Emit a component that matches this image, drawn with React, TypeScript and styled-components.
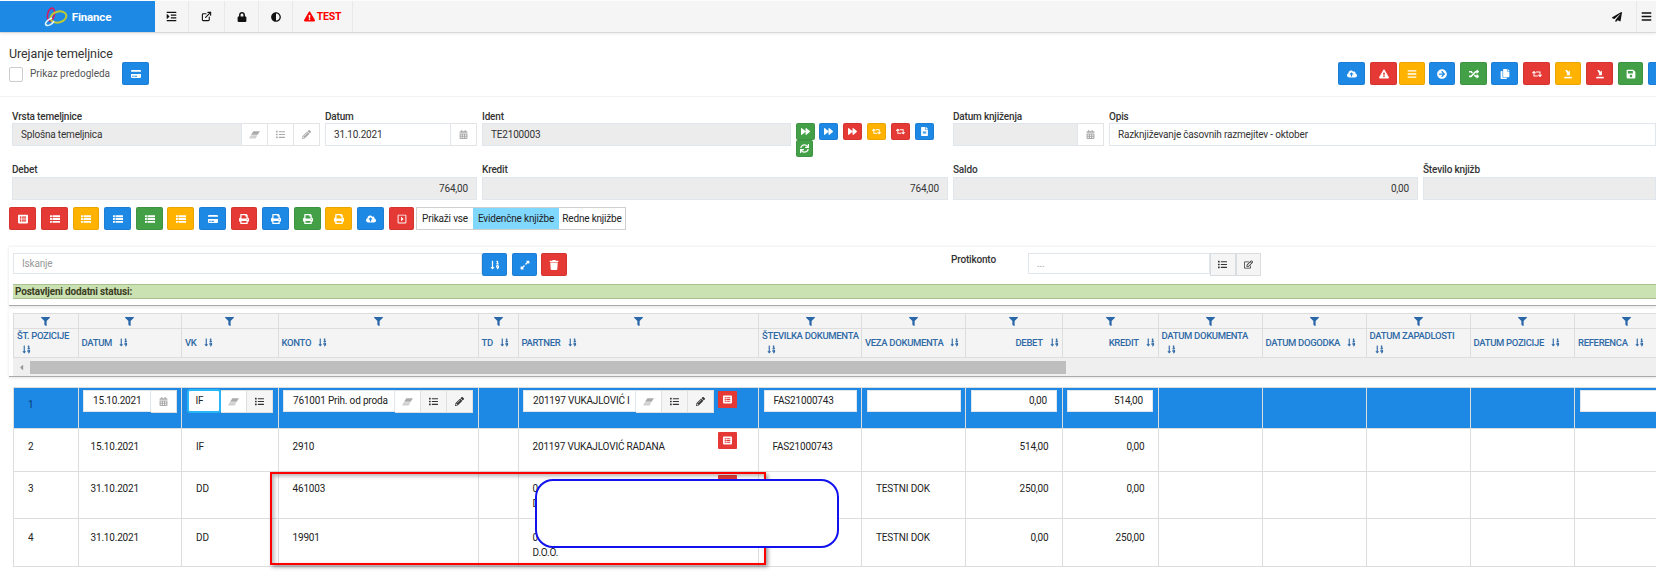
import React from "react";
import styled, {createGlobalStyle} from "styled-components";
import {IconType} from "react-icons";
import {FiExternalLink} from "react-icons/fi";
import {
    FaAdjust,
    FaArrowCircleRight,
    FaBars,
    FaCalendarAlt,
    FaCaretLeft,
    FaCloudUploadAlt,
    FaCopy,
    FaCreditCard,
    FaExclamationTriangle,
    FaExpandAlt,
    FaFileAlt,
    FaFilter,
    FaForward,
    FaIndent,
    FaList,
    FaListAlt,
    FaLock,
    FaPaperPlane,
    FaPencilAlt,
    FaPrint,
    FaRandom,
    FaRegCaretSquareRight,
    FaRegEdit,
    FaRetweet,
    FaSave,
    FaSortNumericDown,
    FaSync,
    FaTrash,
} from "react-icons/fa";

const RED = "#e53935";
const YELLOW = "#ffb300";
const BLUE = "#1e88e5";
const GREEN = "#43a047";

const COLUMNS = [64.5, 103.5, 96.5, 200, 40, 240.5, 103, 104, 96.5, 96, 104, 104, 104, 104.5, 104];

const GlobalStyle = createGlobalStyle`
  html, body {
    margin: 0;
    background: #fff;
  }

  body {
    font-family: Roboto, "Liberation Sans", sans-serif;
    font-size: 10px;
    letter-spacing: -0.18px;
    color: #222;
  }
`;

// tray with an arrow, used on the top toolbar
const TrayArrow: IconType = (props) => (
    <svg viewBox="0 0 16 16" width="1em" height="1em" fill="currentColor" {...props}>
        <path d="M2 12.5h12V15H2z"/>
        <path d="M3.5 1.5h3l2 3 2.5-2v7.5H5l2-2.2z"/>
    </svg>
);

// the old flat eraser, no package has this one
const Eraser: IconType = (props) => (
    <svg viewBox="0 0 16 16" width="1.3em" height="1.3em" fill="currentColor" {...props}>
        <path d="M6 3h9l-3.2 5H2.8z"/>
        <path d="M2.5 8.5h9L9 13H0z" opacity="0.55"/>
    </svg>
);

const ThRows: IconType = (props) => (
    <svg viewBox="0 0 16 14" width="1em" height="1em" fill="currentColor" {...props}>
        <path d="M0 1h3v3H0zM4 1h12v3H4zM0 5.5h3v3H0zM4 5.5h12v3H4zM0 10h3v3H0zM4 10h12v3H4z"/>
    </svg>
);

const Logo = () => (
    <svg width="24" height="20" viewBox="0 0 24 20" fill="none">
        <ellipse cx="7" cy="7.5" rx="3.4" ry="6.5" stroke="#d81b60" strokeWidth="1.6"
                 transform="rotate(12 7 7.5)"/>
        <ellipse cx="14.5" cy="10" rx="8" ry="5.5" stroke="#c0ca33" strokeWidth="2"
                 transform="rotate(-14 14.5 10)"/>
        <path d="M8 11 C3 13 0.5 16 2 18 C4 19.5 8 17.5 10 14" stroke="#e3f2fd" strokeWidth="1.6"/>
    </svg>
);

const ActionButton = ({icon: Icon, color, w = 27, h = 23, size = 10, gap = 0}: {
    icon: IconType;
    color: string;
    w?: number;
    h?: number;
    size?: number;
    gap?: number;
}) => (
    <Btn $color={color} $w={w} $h={h} $gap={gap}>
        <Icon size={size}/>
    </Btn>
);

const TOP_ACTIONS: [IconType, string, number, number][] = [
    [FaCloudUploadAlt, BLUE, 27, 0],
    [FaExclamationTriangle, RED, 27, 5],
    [FaBars, YELLOW, 26, 2],
    [FaArrowCircleRight, BLUE, 26, 4],
    [FaRandom, GREEN, 27, 5],
    [FaCopy, BLUE, 27, 4],
    [FaRetweet, RED, 27, 5],
    [TrayArrow, YELLOW, 26, 5],
    [TrayArrow, RED, 27, 5],
    [FaSave, GREEN, 25, 5],
    [FaSave, BLUE, 27, 5],
];

const TOOL_ACTIONS: [IconType, string, number, number][] = [
    [FaListAlt, RED, 27, 0],
    [ThRows, RED, 27, 5],
    [ThRows, YELLOW, 26, 5],
    [ThRows, BLUE, 27, 5],
    [ThRows, GREEN, 27, 5],
    [ThRows, YELLOW, 27, 4],
    [FaCreditCard, BLUE, 27, 5],
    [FaPrint, RED, 26, 5],
    [FaPrint, BLUE, 27, 5],
    [FaPrint, GREEN, 27, 5],
    [FaPrint, YELLOW, 27, 4],
    [FaCloudUploadAlt, BLUE, 27, 5],
    [FaRegCaretSquareRight, RED, 25, 5],
];

const IDENT_ACTIONS: [IconType, string][] = [
    [FaForward, GREEN],
    [FaForward, BLUE],
    [FaForward, RED],
    [FaRetweet, YELLOW],
    [FaRetweet, RED],
    [FaFileAlt, BLUE],
];

const HEADERS: [string, boolean?][] = [
    ["Št. pozicije"],
    ["Datum"],
    ["VK"],
    ["Konto"],
    ["TD"],
    ["Partner"],
    ["Številka dokumenta"],
    ["Veza dokumenta"],
    ["Debet", true],
    ["Kredit", true],
    ["Datum dokumenta"],
    ["Datum dogodka"],
    ["Datum zapadlosti"],
    ["Datum pozicije"],
    ["Referenca"],
];

const Columns = () => (
    <colgroup>
        {COLUMNS.map((w, i) => <col key={i} style={{width: w}}/>)}
    </colgroup>
);

const RowButton = () => (
    <RowAction>
        <FaListAlt size={9}/>
    </RowAction>
);

export default function App() {
    return (
        <Page>
            <GlobalStyle/>
            <NavBar>
                <Brand>
                    <Logo/>
                    Finance
                </Brand>
                <NavItem $w={34}><FaIndent size={11}/></NavItem>
                <NavItem $w={36}><FiExternalLink size={11} strokeWidth={2.4}/></NavItem>
                <NavItem $w={34}><FaLock size={10}/></NavItem>
                <NavItem $w={34}><FaAdjust size={10}/></NavItem>
                <NavItem $w={60} $red><FaExclamationTriangle size={11}/>TEST</NavItem>
                <NavRight>
                    <NavItem $w={39}><FaPaperPlane size={10}/></NavItem>
                    <NavItem $w={19} $first><FaBars size={11}/></NavItem>
                </NavRight>
            </NavBar>

            <TitleBar>
                <div>
                    <Title>Urejanje temeljnice</Title>
                    <Preview>
                        <CheckBox/>
                        <PreviewLabel>Prikaz predogleda</PreviewLabel>
                        <ActionButton icon={FaCreditCard} color={BLUE}/>
                    </Preview>
                </div>
                <TopActions>
                    {TOP_ACTIONS.map(([icon, color, w, gap], i) => (
                        <ActionButton key={i} icon={icon} color={color} w={w} gap={gap}/>
                    ))}
                </TopActions>
            </TitleBar>

            <FirstFormRow>
                <div>
                    <FieldLabel>Vrsta temeljnice</FieldLabel>
                    <InputGroup>
                        <TextBox $disabled>Splošna temeljnica</TextBox>
                        <Addon $dim><Eraser/></Addon>
                        <Addon $dim><FaList/></Addon>
                        <Addon $dim><FaPencilAlt/></Addon>
                    </InputGroup>
                </div>
                <div>
                    <FieldLabel>Datum</FieldLabel>
                    <InputGroup>
                        <TextBox>31.10.2021</TextBox>
                        <Addon $dim><FaCalendarAlt/></Addon>
                    </InputGroup>
                </div>
                <div>
                    <FieldLabel>Ident</FieldLabel>
                    <InputGroup>
                        <TextBox $disabled>TE2100003</TextBox>
                    </InputGroup>
                </div>
                <IdentActions>
                    {IDENT_ACTIONS.map(([icon, color], i) => (
                        <ActionButton key={i} icon={icon} color={color} w={19} h={17} size={9}/>
                    ))}
                    <ActionButton icon={FaSync} color={GREEN} w={17} h={17} size={9}/>
                </IdentActions>
                <div>
                    <FieldLabel>Datum knjiženja</FieldLabel>
                    <InputGroup>
                        <TextBox $disabled/>
                        <Addon $dim><FaCalendarAlt/></Addon>
                    </InputGroup>
                </div>
                <div>
                    <FieldLabel>Opis</FieldLabel>
                    <InputGroup>
                        <TextBox>Razknjiževanje časovnih razmejitev - oktober</TextBox>
                    </InputGroup>
                </div>
            </FirstFormRow>

            <SecondFormRow>
                <div>
                    <FieldLabel $tall>Debet</FieldLabel>
                    <TextBox $disabled $right>764,00</TextBox>
                </div>
                <div>
                    <FieldLabel $tall>Kredit</FieldLabel>
                    <TextBox $disabled $right>764,00</TextBox>
                </div>
                <div>
                    <FieldLabel $tall>Saldo</FieldLabel>
                    <TextBox $disabled $right>0,00</TextBox>
                </div>
                <div>
                    <FieldLabel $tall>Število knjižb</FieldLabel>
                    <TextBox $disabled $right/>
                </div>
            </SecondFormRow>

            <ToolRow>
                {TOOL_ACTIONS.map(([icon, color, w, gap], i) => (
                    <ActionButton key={i} icon={icon} color={color} w={w} gap={gap}/>
                ))}
                <Toggle>
                    <ToggleItem $w={56}>Prikaži vse</ToggleItem>
                    <ToggleItem $w={86} $active>Evidenčne knjižbe</ToggleItem>
                    <ToggleItem $w={66}>Redne knjižbe</ToggleItem>
                </Toggle>
            </ToolRow>

            <SearchPanel>
                <SearchRow>
                    <SearchBox>Iskanje</SearchBox>
                    <ActionButton icon={FaSortNumericDown} color={BLUE} w={25}/>
                    <ActionButton icon={FaExpandAlt} color={BLUE} w={25} gap={5}/>
                    <ActionButton icon={FaTrash} color={RED} w={26} gap={4}/>
                    <ProtiLabel>Protikonto</ProtiLabel>
                    <ProtiBox>...</ProtiBox>
                    <ProtiAddon><FaList/></ProtiAddon>
                    <ProtiAddon><FaRegEdit/></ProtiAddon>
                </SearchRow>
                <StatusBar>Postavljeni dodatni statusi:</StatusBar>
            </SearchPanel>

            <GridPanel>
                <HeadTable>
                    <Columns/>
                    <thead>
                    <tr>
                        {HEADERS.map((_, i) => (
                            <FilterCell key={i}><FaFilter size={9}/></FilterCell>
                        ))}
                    </tr>
                    <tr>
                        {HEADERS.map(([label, right], i) => (
                            <HeadCell key={i} $right={right}>
                                <HeadLabel>{label}</HeadLabel> <SortIcon size={9}/>
                            </HeadCell>
                        ))}
                    </tr>
                    </thead>
                </HeadTable>
                <ScrollBar>
                    <ScrollArrow><FaCaretLeft size={9}/></ScrollArrow>
                    <ScrollThumb/>
                </ScrollBar>
            </GridPanel>

            <BodyTable>
                <Columns/>
                <tbody>
                <SelectedRow>
                    <IndexCell>1</IndexCell>
                    <EditCell>
                        <InlineGroup>
                            <InlineBox>15.10.2021</InlineBox>
                            <InlineAddon $dim><FaCalendarAlt/></InlineAddon>
                        </InlineGroup>
                    </EditCell>
                    <EditCell>
                        <InlineGroup>
                            <InlineBox $focus>IF</InlineBox>
                            <InlineAddon $dim><Eraser/></InlineAddon>
                            <InlineAddon $grey><FaList/></InlineAddon>
                        </InlineGroup>
                    </EditCell>
                    <EditCell>
                        <InlineGroup>
                            <InlineBox>761001 Prih. od proda</InlineBox>
                            <InlineAddon $dim><Eraser/></InlineAddon>
                            <InlineAddon $grey><FaList/></InlineAddon>
                            <InlineAddon $grey><FaPencilAlt/></InlineAddon>
                        </InlineGroup>
                    </EditCell>
                    <td/>
                    <PartnerEditCell>
                        <InlineGroup>
                            <InlineBox>201197 VUKAJLOVIĆ I</InlineBox>
                            <InlineAddon $dim><Eraser/></InlineAddon>
                            <InlineAddon $grey><FaList/></InlineAddon>
                            <InlineAddon $grey><FaPencilAlt/></InlineAddon>
                        </InlineGroup>
                        <RowButton/>
                    </PartnerEditCell>
                    <EditCell><InlineBox>FAS21000743</InlineBox></EditCell>
                    <EditCell><InlineBox/></EditCell>
                    <EditCell><InlineBox $right>0,00</InlineBox></EditCell>
                    <EditCell><InlineBox $right>514,00</InlineBox></EditCell>
                    <td/>
                    <td/>
                    <td/>
                    <td/>
                    <EditCell><InlineBox/></EditCell>
                </SelectedRow>
                <DataRow $h={43} $pt={10}>
                    <td>2</td>
                    <DateCell>15.10.2021</DateCell>
                    <td>IF</td>
                    <td>2910</td>
                    <td/>
                    <PartnerCell>201197 VUKAJLOVIĆ RADANA<RowButton/></PartnerCell>
                    <DocCell>FAS21000743</DocCell>
                    <td/>
                    <AmountCell>514,00</AmountCell>
                    <AmountCell>0,00</AmountCell>
                    <td/><td/><td/><td/><td/>
                </DataRow>
                <DataRow $h={47} $pt={9}>
                    <td>3</td>
                    <DateCell>31.10.2021</DateCell>
                    <td>DD</td>
                    <td>461003</td>
                    <td/>
                    <PartnerCell>0<br/>D<RowButton/></PartnerCell>
                    <DocCell/>
                    <td>TESTNI DOK</td>
                    <AmountCell>250,00</AmountCell>
                    <AmountCell>0,00</AmountCell>
                    <td/><td/><td/><td/><td/>
                </DataRow>
                <DataRow $h={48} $pt={11}>
                    <td>4</td>
                    <DateCell>31.10.2021</DateCell>
                    <td>DD</td>
                    <td>19901</td>
                    <td/>
                    <PartnerCell>0<br/>D.O.O.</PartnerCell>
                    <DocCell/>
                    <td>TESTNI DOK</td>
                    <AmountCell>0,00</AmountCell>
                    <AmountCell>250,00</AmountCell>
                    <td/><td/><td/><td/><td/>
                </DataRow>
                </tbody>
            </BodyTable>

            <RedMark/>
            <BlueMark/>
        </Page>
    );
}

const Page = styled.div`
  position: relative;
  width: 1656px;
  height: 579px;
  overflow: hidden;
  padding-top: 1px;
  box-sizing: border-box;
`;

const NavBar = styled.div`
  display: flex;
  height: 31px;
  background: #f5f5f5;
  border-bottom: 1px solid #d8d8d8;
  box-shadow: 0 1px 3px rgba(0, 0, 0, 0.08);
`;

const Brand = styled.div`
  display: flex;
  align-items: center;
  justify-content: center;
  gap: 4px;
  width: 155px;
  box-sizing: border-box;
  background: ${BLUE};
  color: #fff;
  font-size: 11.5px;
  font-weight: 700;
`;

const NavItem = styled.div<{ $w: number; $red?: boolean; $first?: boolean }>`
  display: flex;
  align-items: center;
  justify-content: center;
  gap: 2px;
  width: ${p => p.$w}px;
  border-right: ${p => (p.$first ? "none" : "1px solid #e9e9e9")};
  box-sizing: border-box;
  color: ${p => (p.$red ? "#f00" : "#111")};
  font-size: 10.5px;
  font-weight: 700;
`;

const NavRight = styled.div`
  display: flex;
  margin-left: auto;
`;

const TitleBar = styled.div`
  display: flex;
  justify-content: space-between;
  height: 64px;
  padding: 13px 0 0 9px;
  box-sizing: border-box;
  border-bottom: 1px solid #f2f2f2;
`;

const Title = styled.div`
  height: 16px;
  color: #333;
  font-size: 12.5px;
  letter-spacing: -0.1px;
  line-height: 16px;
`;

const Preview = styled.div`
  display: flex;
  align-items: center;
`;

const CheckBox = styled.span`
  width: 12px;
  height: 13px;
  margin-top: 1px;
  border: 1px solid #ccc;
  border-radius: 2px;
  background: #fff;
`;

const PreviewLabel = styled.span`
  width: 92px;
  margin-left: 7px;
  color: #555;
  font-size: 10px;
  letter-spacing: 0;
`;

const TopActions = styled.div`
  display: flex;
  flex: none;
  margin: 16px -19px 0 0;
`;

const Btn = styled.span<{ $color: string; $w: number; $h: number; $gap: number }>`
  display: inline-flex;
  align-items: center;
  justify-content: center;
  flex: none;
  width: ${p => p.$w}px;
  height: ${p => p.$h}px;
  margin-left: ${p => p.$gap}px;
  box-sizing: border-box;
  border: 1px solid rgba(0, 0, 0, 0.08);
  border-radius: 2px;
  background: ${p => p.$color};
  color: #fff;
`;

const FirstFormRow = styled.div`
  display: grid;
  grid-template-columns: 308px 152px 309px 152px 151px 1fr;
  column-gap: 5px;
  height: 47px;
  margin-top: 13px;
  padding-left: 12px;
`;

const SecondFormRow = styled.div`
  display: grid;
  grid-template-columns: 465px 466px 465px 1fr;
  column-gap: 5px;
  margin-top: 5px;
  padding-left: 12px;
`;

const FieldLabel = styled.div<{ $tall?: boolean }>`
  height: ${p => (p.$tall ? 15 : 13)}px;
  color: #333;
  font-size: 10px;
  font-weight: 500;
  line-height: ${p => (p.$tall ? 15 : 13)}px;
  white-space: nowrap;
`;

const InputGroup = styled.div`
  display: flex;
`;

const TextBox = styled.div<{ $disabled?: boolean; $right?: boolean }>`
  flex: 1;
  min-width: 0;
  height: 23px;
  padding: 0 8px;
  box-sizing: border-box;
  border: 1px solid #e0e6ec;
  background: ${p => (p.$disabled ? "#ececec" : "#fff")};
  color: #333;
  line-height: 21px;
  text-align: ${p => (p.$right ? "right" : "left")};
  white-space: nowrap;
`;

const Addon = styled.span<{ $dim?: boolean }>`
  display: inline-flex;
  align-items: center;
  justify-content: center;
  flex: none;
  width: 26px;
  height: 23px;
  box-sizing: border-box;
  border: 1px solid #e4e4e4;
  border-left: none;
  background: #fff;
  color: ${p => (p.$dim ? "#aaa" : "#333")};
  font-size: 9px;
`;

const IdentActions = styled.div`
  display: flex;
  flex-wrap: wrap;
  align-content: flex-start;
  column-gap: 5px;
  padding-top: 13px;

  & > span:nth-child(2) {
    margin-left: -1px;
  }
`;

const ToolRow = styled.div`
  display: flex;
  align-items: center;
  margin-top: 7px;
  padding-left: 9px;
`;

const Toggle = styled.div`
  display: flex;
  margin-left: 2px;
  border: 1px solid #d0d0d0;
  box-sizing: border-box;
`;

const ToggleItem = styled.span<{ $w: number; $active?: boolean }>`
  width: ${p => p.$w}px;
  height: 21px;
  background: ${p => (p.$active ? "#80d8ff" : "#fff")};
  color: #222;
  font-size: 10px;
  line-height: 21px;
  text-align: center;
  white-space: nowrap;
`;

const SearchPanel = styled.div`
  margin: 16px 0 0 9px;
  padding: 6px 0 6px 4px;
  border-top: 1px solid #f4f4f4;
  border-bottom: 1px solid #aaa;
  box-shadow: 0 1px 3px rgba(0, 0, 0, 0.12);
`;

const SearchRow = styled.div`
  display: flex;
  align-items: flex-start;
`;

const SearchBox = styled.div`
  width: 469px;
  height: 21px;
  padding: 0 8px;
  box-sizing: border-box;
  border: 1px solid #e0e6ec;
  color: #999;
  line-height: 19px;
`;

const ProtiLabel = styled.span`
  width: 77px;
  margin-left: 384px;
  color: #333;
  font-size: 10px;
  font-weight: 500;
  line-height: 14px;
`;

const ProtiBox = styled(SearchBox)`
  width: 182px;
`;

const ProtiAddon = styled.span`
  display: inline-flex;
  align-items: center;
  justify-content: center;
  width: 25.5px;
  height: 23px;
  box-sizing: border-box;
  border: 1px solid #d9dde0;
  background: #f5f5f5;
  color: #333;
  font-size: 9px;
`;

const StatusBar = styled.div`
  height: 15px;
  margin-top: 8px;
  padding-left: 2px;
  box-sizing: border-box;
  border-top: 1px solid #a9c08f;
  border-bottom: 1px solid #a9c08f;
  background: #cae2b2;
  color: #3b3b1f;
  font-size: 10px;
  font-weight: 700;
  line-height: 13px;
`;

const GridPanel = styled.div`
  margin: 3px 0 0 9px;
  padding: 4px 0 0 4px;
  border-bottom: 1px solid #aaa;
  box-shadow: 0 1px 3px rgba(0, 0, 0, 0.1);
`;

const HeadTable = styled.table`
  width: 1665px;
  border-collapse: collapse;
  table-layout: fixed;
`;

const FilterCell = styled.th`
  height: 14px;
  padding: 0;
  border: 1px solid #ddd;
  background: #f4f4f4;
  color: #2a67a8;
  line-height: 0;
  vertical-align: middle;
`;

const HeadCell = styled.th<{ $right?: boolean }>`
  height: 29px;
  padding: 0 3px;
  box-sizing: border-box;
  border: 1px solid #ddd;
  background: #f4f4f4;
  color: #2f6aa6;
  font-size: 9.5px;
  font-weight: 500;
  letter-spacing: -0.32px;
  line-height: 14px;
  text-align: ${p => (p.$right ? "right" : "left")};
  text-transform: uppercase;
  vertical-align: middle;
`;

const HeadLabel = styled.span`
  white-space: nowrap;
`;

const SortIcon = styled(FaSortNumericDown)`
  margin-left: 5px;
  vertical-align: -1px;
`;

const ScrollBar = styled.div`
  display: flex;
  height: 18px;
  padding-top: 3px;
  box-sizing: border-box;
  background: #efefef;
`;

const ScrollArrow = styled.span`
  display: flex;
  align-items: center;
  justify-content: center;
  width: 17px;
  height: 13px;
  color: #999;
`;

const ScrollThumb = styled.span`
  width: 1036px;
  height: 13px;
  background: #bebebe;
`;

const BodyTable = styled.table`
  width: 1665px;
  margin: 10px 0 0 13px;
  border-collapse: collapse;
  table-layout: fixed;

  td {
    padding: 0 0 0 14px;
    border: 1px solid #ddd;
    line-height: 15px;
    vertical-align: top;
  }
`;

const SelectedRow = styled.tr`
  height: 41px;
  background: ${BLUE};
`;

const DataRow = styled.tr<{ $h: number; $pt: number }>`
  height: ${p => p.$h}px;

  td {
    padding-top: ${p => p.$pt}px;
  }
`;

const IndexCell = styled.td`
  color: #0d3c78;

  && {
    padding-top: 9px;
  }
`;

const EditCell = styled.td`
  && {
    padding: 2px 4.5px 0 4.5px;
  }
`;

const PartnerEditCell = styled(EditCell)`
  position: relative;

  && {
    padding-right: 44px;
  }
`;

const DateCell = styled.td`
  && {
    padding-left: 12px;
  }
`;

const PartnerCell = styled.td`
  position: relative;
`;

const DocCell = styled.td`
  && {
    padding-left: 13.5px;
  }
`;

const AmountCell = styled.td`
  text-align: right;

  && {
    padding-left: 0;
    padding-right: 13px;
  }
`;

const InlineGroup = styled.div`
  display: flex;
  flex: 1;
  min-width: 0;
`;

const InlineBox = styled.div<{ $focus?: boolean; $right?: boolean }>`
  flex: 1;
  min-width: 0;
  height: ${p => (p.$focus ? 24 : 22)}px;
  margin-top: ${p => (p.$focus ? -1 : 0)}px;
  padding: 0 ${p => (p.$focus ? 7 : 9)}px;
  box-sizing: border-box;
  overflow: hidden;
  border: ${p => (p.$focus ? "2px solid #29b6f6" : "1px solid #e0e6ec")};
  border-radius: ${p => (p.$focus ? "3px" : "0")};
  background: #fff;
  color: #222;
  line-height: 20px;
  text-align: ${p => (p.$right ? "right" : "left")};
  white-space: nowrap;
`;

const InlineAddon = styled.span<{ $dim?: boolean; $grey?: boolean }>`
  display: inline-flex;
  align-items: center;
  justify-content: center;
  flex: none;
  width: 26px;
  height: 23px;
  box-sizing: border-box;
  border: 1px solid #e0e0e0;
  border-left: none;
  background: ${p => (p.$grey ? "#f5f5f5" : "#fff")};
  color: ${p => (p.$dim ? "#aaa" : "#333")};
  font-size: 9px;
`;

// sits at the top right of the partner cell, over the wrapping text
const RowAction = styled.span`
  display: inline-flex;
  align-items: center;
  justify-content: center;
  position: absolute;
  top: 3px;
  right: 21px;
  width: 19px;
  height: 17px;
  border-radius: 1px;
  background: ${RED};
  color: #fff;
`;

const RedMark = styled.div`
  position: absolute;
  left: 270px;
  top: 472px;
  width: 492px;
  height: 89px;
  border: 2px solid #f00;
  box-shadow: 2px 2px 4px rgba(0, 0, 0, 0.4), inset 2px 2px 4px rgba(0, 0, 0, 0.3);
`;

const BlueMark = styled.div`
  position: absolute;
  left: 535px;
  top: 479px;
  width: 300px;
  height: 65px;
  border: 2px solid #1212ee;
  border-radius: 18px;
  background: #fff;
`;
